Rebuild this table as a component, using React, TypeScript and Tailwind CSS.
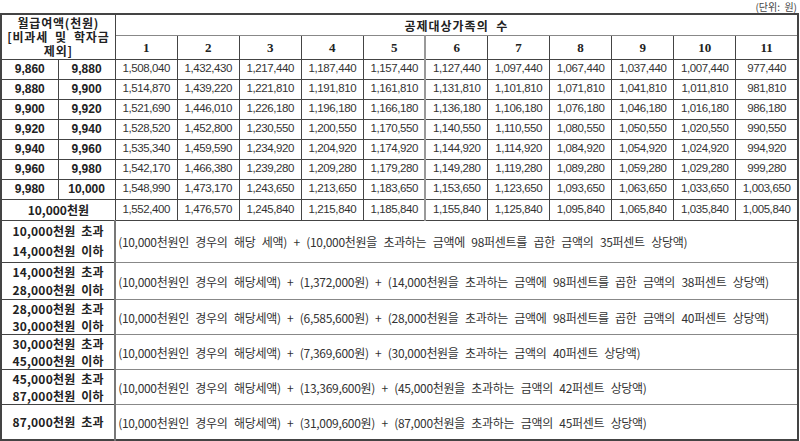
import React from 'react';

const data: [string, string, string[]][] = [
  ['9,860', '9,880', ['1,508,040', '1,432,430', '1,217,440', '1,187,440', '1,157,440', '1,127,440', '1,097,440', '1,067,440', '1,037,440', '1,007,440', '977,440']],
  ['9,880', '9,900', ['1,514,870', '1,439,220', '1,221,810', '1,191,810', '1,161,810', '1,131,810', '1,101,810', '1,071,810', '1,041,810', '1,011,810', '981,810']],
  ['9,900', '9,920', ['1,521,690', '1,446,010', '1,226,180', '1,196,180', '1,166,180', '1,136,180', '1,106,180', '1,076,180', '1,046,180', '1,016,180', '986,180']],
  ['9,920', '9,940', ['1,528,520', '1,452,800', '1,230,550', '1,200,550', '1,170,550', '1,140,550', '1,110,550', '1,080,550', '1,050,550', '1,020,550', '990,550']],
  ['9,940', '9,960', ['1,535,340', '1,459,590', '1,234,920', '1,204,920', '1,174,920', '1,144,920', '1,114,920', '1,084,920', '1,054,920', '1,024,920', '994,920']],
  ['9,960', '9,980', ['1,542,170', '1,466,380', '1,239,280', '1,209,280', '1,179,280', '1,149,280', '1,119,280', '1,089,280', '1,059,280', '1,029,280', '999,280']],
  ['9,980', '10,000', ['1,548,990', '1,473,170', '1,243,650', '1,213,650', '1,183,650', '1,153,650', '1,123,650', '1,093,650', '1,063,650', '1,033,650', '1,003,650']],
];

const flat = ['1,552,400', '1,476,570', '1,245,840', '1,215,840', '1,185,840', '1,155,840', '1,125,840', '1,095,840', '1,065,840', '1,035,840', '1,005,840'];

const brackets: [string, string | null, string, string][] = [
  ['10,000천원 초과', '14,000천원 이하', '(10,000천원인 경우의 해당 세액) + (10,000천원을 초과하는 금액에 98퍼센트를 곱한 금액의 35퍼센트 상당액)', 'h-[42px] leading-[20px]'],
  ['14,000천원 초과', '28,000천원 이하', '(10,000천원인 경우의 해당세액) + (1,372,000원) + (14,000천원을 초과하는 금액에 98퍼센트를 곱한 금액의 38퍼센트 상당액)', 'h-[36px] leading-[18px]'],
  ['28,000천원 초과', '30,000천원 이하', '(10,000천원인 경우의 해당세액) + (6,585,600원) + (28,000천원을 초과하는 금액에 98퍼센트를 곱한 금액의 40퍼센트 상당액)', 'h-[35px] leading-[17px]'],
  ['30,000천원 초과', '45,000천원 이하', '(10,000천원인 경우의 해당세액) + (7,369,600원) + (30,000천원을 초과하는 금액의 40퍼센트 상당액)', 'h-[35px] leading-[17px]'],
  ['45,000천원 초과', '87,000천원 이하', '(10,000천원인 경우의 해당세액) + (13,369,600원) + (45,000천원을 초과하는 금액의 42퍼센트 상당액)', 'h-[35px] leading-[17px]'],
  ['87,000천원 초과', null, '(10,000천원인 경우의 해당세액) + (31,009,600원) + (87,000천원을 초과하는 금액의 45퍼센트 상당액)', 'h-[36px] leading-[17px]'],
];

const cell = 'border border-[#444] p-0 overflow-hidden';
const num = 'font-["Liberation_Sans",sans-serif] text-[11.5px] leading-none text-[#333] tracking-[-0.4px]';
const bold = 'font-["Noto_Sans_CJK_KR",sans-serif] font-bold text-[12px] text-[#222]';
const boldNum = 'font-["Liberation_Sans",sans-serif] font-bold text-[12px] leading-none text-[#222]';

export default function App() {
  return (
    <div className="w-[800px] h-[441px] bg-white overflow-hidden">
      <div className="h-[13px] pt-[1px] pr-[3px] text-right text-[10px] leading-[11px] text-[#444] font-['Noto_Sans_CJK_KR',sans-serif]">
        (단위:&nbsp;&nbsp;원)
      </div>
      <table className="table-fixed border-collapse w-[799px] border-2 border-[#444]">
        <colgroup>
          <col className="w-[57px]" />
          <col className="w-[57px]" />
          {Array.from({ length: 11 }).map((_, i) => (
            <col key={i} className="w-[62px]" />
          ))}
        </colgroup>
        <tbody>
          <tr className="h-[21px]">
            <td colSpan={2} rowSpan={2} className={`${cell} text-center align-middle`}>
              <div className={`${bold} text-[11px] leading-[14px] tracking-[0.8px] whitespace-nowrap`}>
                <div>월급여액(천원)</div>
                <div>[비과세&nbsp; 및&nbsp; 학자금</div>
                <div>제외]</div>
              </div>
            </td>
            <td colSpan={11} className={`${cell} border-b-[#888] text-center leading-none`}>
              <span className={`${bold} leading-none tracking-[1px]`}>공제대상가족의&nbsp; 수</span>
            </td>
          </tr>
          <tr className="h-[24px]">
            {Array.from({ length: 11 }).map((_, i) => (
              <td
                key={i}
                className={`${cell} ${i === 5 ? 'border-l-2 border-l-[#999]' : ''} text-center font-['Liberation_Serif',serif] font-bold text-[13px] leading-none text-[#222]`}
              >
                {i + 1}
              </td>
            ))}
          </tr>
          {data.map(([a, b, vals]) => (
            <tr key={a} className="h-[20px]">
              <td className={`${cell} text-center ${boldNum}`}>{a}</td>
              <td className={`${cell} text-center ${boldNum}`}>{b}</td>
              {vals.map((v, i) => (
                <td key={i} className={`${cell} ${i === 5 ? 'border-l-2 border-l-[#999]' : ''} text-center ${num}`}>
                  {v}
                </td>
              ))}
            </tr>
          ))}
          <tr className="h-[21px]">
            <td colSpan={2} className={`${cell} text-center ${bold} leading-none`}>10,000천원</td>
            {flat.map((v, i) => (
              <td key={i} className={`${cell} ${i === 5 ? 'border-l-2 border-l-[#999]' : ''} text-center ${num}`}>
                {v}
              </td>
            ))}
          </tr>
          {brackets.map(([l1, l2, text, h]) => (
            <tr key={l1} className={h}>
              <td colSpan={2} className={`${cell} border-r-2 border-r-[#777] text-center ${bold}`}>
                <div className="tracking-[0.2px]">{l1.replace(' ', '\u00a0 ')}</div>
                {l2 && <div className="tracking-[0.2px]">{l2.replace(' ', '\u00a0 ')}</div>}
              </td>
              <td colSpan={11} className={`${cell} border-[#888] pl-[2px] text-left leading-none`}>
                <span className="font-['Noto_Sans_CJK_KR',sans-serif] text-[12px] leading-none text-[#333] tracking-[-0.3px] [word-spacing:4px] whitespace-nowrap">
                  {text}
                </span>
              </td>
            </tr>
          ))}
        </tbody>
      </table>
    </div>
  );
}
